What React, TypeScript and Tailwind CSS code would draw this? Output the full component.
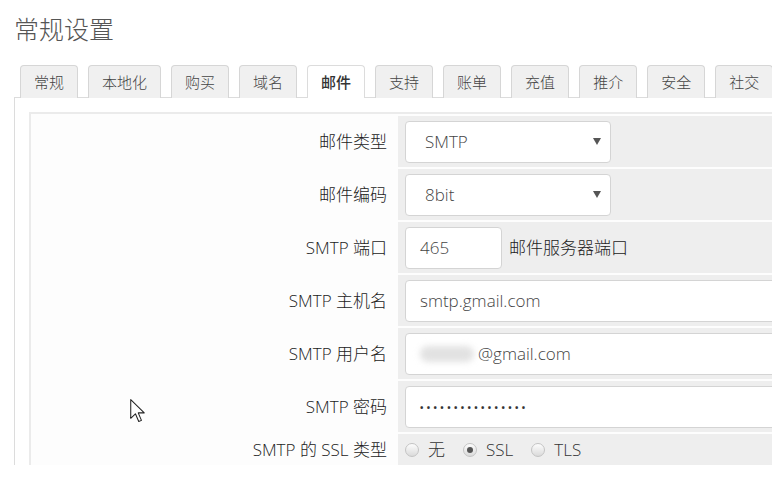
import React from "react";

const tabs = ["常规", "本地化", "购买", "域名", "邮件", "支持", "账单", "充值", "推介", "安全", "社交"];

function Radio({ checked, label }: { checked?: boolean; label: string }) {
  return (
    <label className="flex items-center gap-[9px] mr-[18px]">
      <span className="w-[14px] h-[14px] rounded-full border border-[#c4c4c4] bg-gradient-to-b from-[#fdfdfd] to-[#dadada] flex items-center justify-center">
        {checked && <span className="w-[6px] h-[6px] rounded-full bg-[#555]" />}
      </span>
      <span>{label}</span>
    </label>
  );
}

function Row({ label, children, last }: { label: string; children: React.ReactNode; last?: boolean }) {
  return (
    <>
      <div className={`${last ? "h-[31px]" : "h-[51px]"} flex items-center justify-end pr-[9px] text-[17px] text-[#222] font-light whitespace-nowrap`}>
        {label}
      </div>
      <div className={`${last ? "h-[31px]" : "h-[51px]"} bg-[#eeeeee] flex items-center pl-[7px] text-[17px] text-[#333] font-light`}>
        {children}
      </div>
    </>
  );
}

function Select({ value }: { value: string }) {
  return (
    <div className="w-[206px] h-[42px] bg-white border border-[#d4d4d4] rounded-[4px] flex items-center justify-between pl-[19px] pr-[9px] text-[#444]">
      <span>{value}</span>
      <svg width="8" height="7" viewBox="0 0 8 7">
        <path d="M0 0 H8 L4 7 Z" fill="#555" />
      </svg>
    </div>
  );
}

function TextBox({ children, width }: { children: React.ReactNode; width?: string }) {
  return (
    <div className={`${width ?? "w-[420px]"} h-[42px] bg-white border border-[#d4d4d4] rounded-[4px] flex items-center pl-[14px] text-[#444] shrink-0`}>
      {children}
    </div>
  );
}

export default function App() {
  return (
    <div
      className="w-[772px] h-[477px] bg-white overflow-hidden relative"
      style={{ fontFamily: '"Open Sans", "Noto Sans CJK SC", sans-serif' }}
    >
      <div className="h-[465px] overflow-hidden">
        <h1 className="pl-[14px] pt-[13px] text-[25px] leading-[32px] text-[#555] font-light">常规设置</h1>

        {/* tabs */}
        <div className="flex gap-[10px] pl-[20px] mt-[20px] h-[32px] relative z-10">
          {tabs.map((t) => (
            <div
              key={t}
              className={`h-[33px] px-[13px] flex items-center text-[15px] border border-b-0 rounded-t-[4px] whitespace-nowrap ${
                t === "邮件"
                  ? "bg-white border-[#dcdcdc] text-[#333] font-medium"
                  : "bg-[#f0f0f0] border-[#d6d6d6] text-[#444] font-light h-[32px]"
              }`}
            >
              {t}
            </div>
          ))}
        </div>

        {/* panel */}
        <div className="ml-[14px] border-l border-t border-[#dcdcdc] pl-[14px] pt-[14px] h-[400px]">
          <div className="border-2 border-r-0 border-[#ebebeb] p-[2px] pr-0 bg-[#fdfdfd]">
            <div className="grid grid-cols-[363px_1fr] gap-[2px]">
              <Row label="邮件类型">
                <Select value="SMTP" />
              </Row>
              <Row label="邮件编码">
                <Select value="8bit" />
              </Row>
              <Row label="SMTP 端口">
                <TextBox width="w-[97px]">465</TextBox>
                <span className="ml-[7px] text-[#222]">邮件服务器端口</span>
              </Row>
              <Row label="SMTP 主机名">
                <TextBox>smtp.gmail.com</TextBox>
              </Row>
              <Row label="SMTP 用户名">
                <TextBox>
                  <span className="inline-block w-[54px] h-[16px] bg-[#e2e2e2] blur-[3px] rounded-full mr-[4px]" />
                  <span>@gmail.com</span>
                </TextBox>
              </Row>
              <Row label="SMTP 密码">
                <TextBox>
                  <span className="text-[9px] tracking-[3.4px] text-[#333] pt-[2px] font-bold">••••••••••••••••</span>
                </TextBox>
              </Row>
              <Row label="SMTP 的 SSL 类型" last>
                <Radio label="无" />
                <Radio label="SSL" checked />
                <Radio label="TLS" />
              </Row>
            </div>
          </div>
        </div>
      </div>

      {/* mouse pointer */}
      <svg className="absolute left-[129px] top-[398px]" width="17" height="26" viewBox="0 0 16 25">
        <path
          d="M1.5 1.5 L1.5 19.5 L6 15.2 L9.2 22.6 L11.8 21.5 L8.7 14.3 L14.5 14.3 Z"
          fill="#fff"
          stroke="#222"
          strokeWidth="1"
          strokeLinejoin="round"
        />
      </svg>
    </div>
  );
}
